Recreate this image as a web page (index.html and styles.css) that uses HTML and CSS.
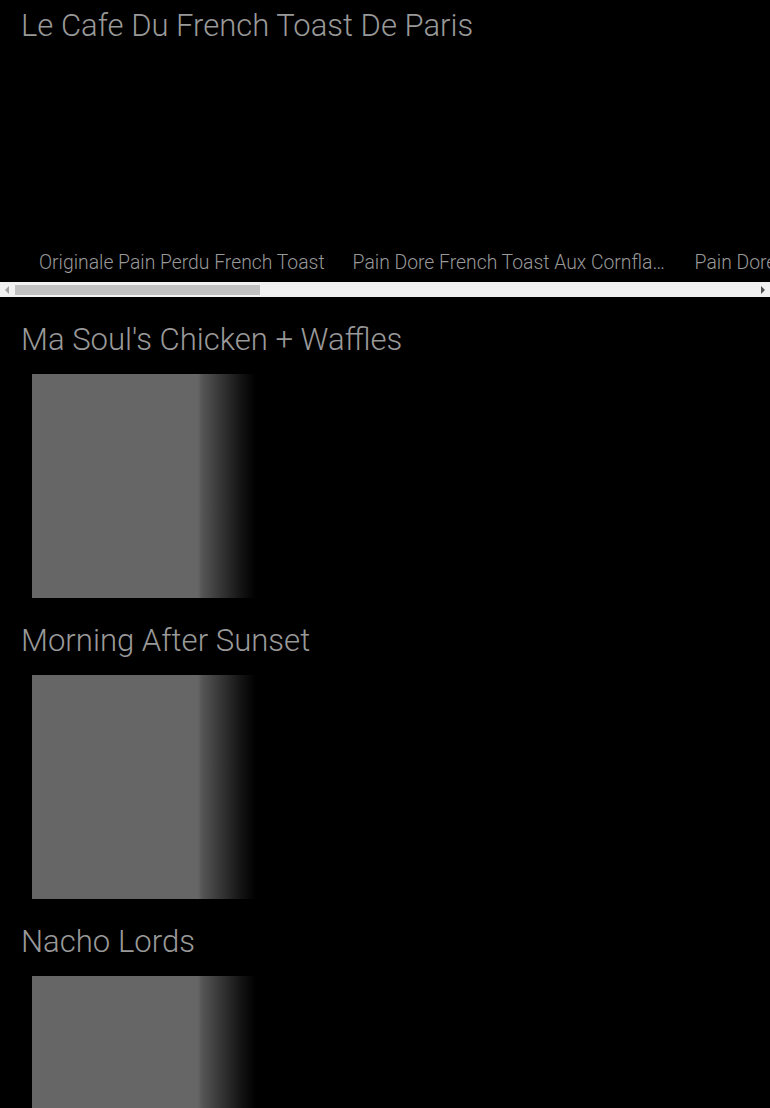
FILE: index.html
```html
<!DOCTYPE html>
<html>
<head>
<meta charset="utf-8">
<title>Le Cafe Du French Toast De Paris</title>
<link rel="stylesheet" href="styles.css">
</head>
<body>
<h1 class="title">Le Cafe Du French Toast De Paris</h1>
<div class="carousel">
  <div class="track">
    <div class="item"><div class="thumb"></div><div class="label">Originale Pain Perdu French Toast</div></div>
    <div class="item"><div class="thumb"></div><div class="label">Pain Dore French Toast Aux Cornflakes</div></div>
    <div class="item"><div class="thumb"></div><div class="label">Pain Dore French Toast Aux Fruits</div></div>
    <div class="item"><div class="thumb"></div><div class="label">Pain Perdu Brioche French Toast</div></div>
  </div>
</div>
<div class="scrollbar">
  <div class="arrow arrow-left"></div>
  <div class="rail"><div class="thumb-bar"></div></div>
  <div class="arrow arrow-right"></div>
</div>
<section class="section">
  <h2 class="heading">Ma Soul's Chicken + Waffles</h2>
  <div class="tile"></div>
</section>
<section class="section">
  <h2 class="heading">Morning After Sunset</h2>
  <div class="tile"></div>
</section>
<section class="section">
  <h2 class="heading">Nacho Lords</h2>
  <div class="tile"></div>
</section>
</body>
</html>
```
FILE: styles.css
```css
html, body {
  margin: 0;
  padding: 0;
  background: #000;
}
body {
  color: #999;
  font-family: Roboto, "Liberation Sans", sans-serif;
  font-weight: 300;
  overflow: hidden;
}
.title {
  margin: 0;
  padding-left: 21px;
  font-size: 31px;
  line-height: 51px;
  font-weight: 300;
  white-space: nowrap;
}
.carousel {
  overflow: hidden;
  height: 231px;
}
.track {
  display: flex;
  padding-left: 25px;
  align-items: flex-end;
  height: 226px;
}
.item {
  flex: none;
  padding: 0 14px;
  display: flex;
  flex-direction: column;
}
.thumb {
  height: 198px;
}
.label {
  font-size: 19.35px;
  line-height: 28px;
  white-space: nowrap;
  overflow: hidden;
  text-overflow: ellipsis;
  max-width: 314px;
}
.scrollbar {
  display: flex;
  align-items: center;
  height: 15px;
  background: #f1f1f1;
}
.arrow {
  flex: none;
  width: 15px;
  height: 15px;
  display: flex;
  align-items: center;
  justify-content: center;
}
.arrow::before {
  content: "";
  width: 0;
  height: 0;
  border-top: 4px solid transparent;
  border-bottom: 4px solid transparent;
}
.arrow-left::before {
  border-right: 4px solid #a3a3a3;
  margin-left: -1px;
}
.arrow-right::before {
  border-left: 4px solid #505050;
  margin-right: -1px;
}
.rail {
  flex: 1;
  height: 15px;
  display: flex;
  align-items: center;
}
.thumb-bar {
  width: 245px;
  height: 10px;
  background: #c1c1c1;
}
.section {
  padding-top: 17px;
}
.heading {
  margin: 0 0 9px;
  padding-left: 21px;
  font-size: 31.1px;
  line-height: 51px;
  font-weight: 300;
  white-space: nowrap;
}
.tile {
  margin-left: 32px;
  width: 224px;
  height: 224px;
  background: linear-gradient(to right, #666 0, #666 74%, #555 76%, #333 85%, #111 94%, #000 100%);
}
```
